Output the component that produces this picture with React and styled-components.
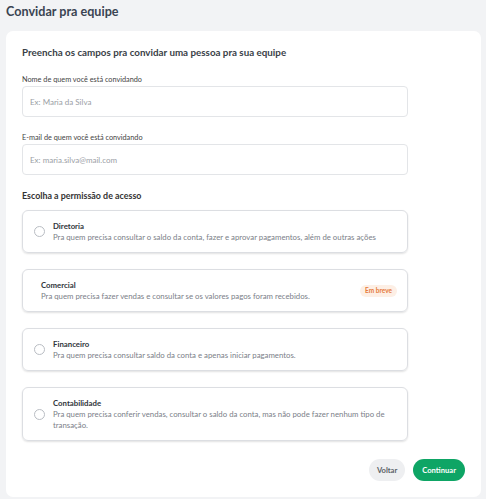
import React, { useState } from 'react';
import styled, { createGlobalStyle } from 'styled-components';

const GlobalStyle = createGlobalStyle`
  html, body {
    margin: 0;
    padding: 0;
    background: #f2f3f5;
    font-family: 'Lato', 'Noto Sans', sans-serif;
  }
  * { box-sizing: border-box; }
`;

const Page = styled.div`
  padding: 3px 5px 3px 6px;
  min-height: 499px;
`;

const PageTitle = styled.h1`
  margin: 0 0 10px;
  font-size: 12.6px;
  line-height: 18px;
  font-weight: 700;
  color: #3a4452;
`;

const Card = styled.div`
  background: #ffffff;
  border-radius: 7px;
  padding: 14px 16px 16px 16px;
`;

const Column = styled.div`
  width: 386px;
`;

const Subtitle = styled.h2`
  margin: 0 0 16px;
  font-size: 9.8px;
  line-height: 14px;
  font-weight: 700;
  color: #3a3f47;
`;

const Field = styled.div`
  display: flex;
  flex-direction: column;
  gap: 2px;
  margin-bottom: ${p => p.last ? 15 : 16}px;
`;

const Label = styled.label`
  font-size: 7.3px;
  line-height: 9px;
  color: #444;
`;

const Input = styled.input`
  height: 31px;
  width: 100%;
  border: 1px solid #e3e5e8;
  border-radius: 4px;
  padding: 0 7px;
  font-family: inherit;
  font-size: 8px;
  color: #333;
  outline: none;
  &::placeholder { color: #9a9ea5; }
`;

const SectionTitle = styled.h3`
  margin: 3px 0 8px;
  font-size: 8.9px;
  line-height: 12px;
  font-weight: 700;
  color: #333;
`;

const Options = styled.div`
  display: flex;
  flex-direction: column;
  gap: 16px;
`;

const Option = styled.div`
  display: flex;
  align-items: center;
  gap: 8px;
  min-height: ${p => p.tall ? 54 : 43}px;
  padding: 8px 10px 8px ${p => p.noRadio ? 18 : 11}px;
  border: 1px solid #dcdee2;
  border-radius: 6px;
  box-shadow: 0 1px 2px rgba(0, 0, 0, 0.12);
  cursor: ${p => p.disabled ? 'default' : 'pointer'};
`;

const Radio = styled.span`
  flex: none;
  width: 11px;
  height: 11px;
  border-radius: 50%;
  border: 1px solid ${p => p.checked ? '#0ea565' : '#b9bdc3'};
  background: ${p => p.checked ? 'radial-gradient(#0ea565 40%, #fff 45%)' : '#fff'};
`;

const OptionText = styled.div`
  flex: 1;
  display: flex;
  flex-direction: column;
`;

const OptionTitle = styled.span`
  font-size: 7.8px;
  line-height: 11px;
  font-weight: 700;
  color: #30343a;
`;

const OptionDesc = styled.span`
  font-size: 7.8px;
  line-height: 11px;
  color: #7b8088;
`;

const Badge = styled.span`
  flex: none;
  padding: 2px 5px;
  border-radius: 8px;
  background: #fdefe5;
  color: #e57a3b;
  font-size: 6.5px;
  font-weight: 700;
  line-height: 8px;
`;

const Actions = styled.div`
  display: flex;
  justify-content: flex-end;
  gap: 8px;
  margin-top: 18px;
`;

const Button = styled.button`
  height: 22px;
  padding: 0 ${p => p.primary ? 9 : 8}px;
  border: none;
  border-radius: 11px;
  font-family: inherit;
  font-size: 7.6px;
  font-weight: 700;
  background: ${p => p.primary ? '#0ea565' : '#eeeff1'};
  color: ${p => p.primary ? '#ffffff' : '#5a5f66'};
  cursor: pointer;
`;

const roles = [
  {
    id: 'diretoria',
    title: 'Diretoria',
    desc: 'Pra quem precisa consultar o saldo da conta, fazer e aprovar pagamentos, além de outras ações',
  },
  {
    id: 'comercial',
    title: 'Comercial',
    desc: 'Pra quem precisa fazer vendas e consultar se os valores pagos foram recebidos.',
    soon: true,
  },
  {
    id: 'financeiro',
    title: 'Financeiro',
    desc: 'Pra quem precisa consultar saldo da conta e apenas iniciar pagamentos.',
  },
  {
    id: 'contabilidade',
    title: 'Contabilidade',
    desc: 'Pra quem precisa conferir vendas, consultar o saldo da conta, mas não pode fazer nenhum tipo de transação.',
    tall: true,
  },
];

const App = () => {
  const [role, setRole] = useState(null);

  return (
    <Page>
      <GlobalStyle />
      <PageTitle>Convidar pra equipe</PageTitle>
      <Card>
        <Subtitle>Preencha os campos pra convidar uma pessoa pra sua equipe</Subtitle>
        <Column>
          <Field>
            <Label>Nome de quem você está convidando</Label>
            <Input placeholder="Ex: Maria da Silva" />
          </Field>
          <Field last>
            <Label>E-mail de quem você está convidando</Label>
            <Input placeholder="Ex: maria.silva@mail.com" />
          </Field>
          <SectionTitle>Escolha a permissão de acesso</SectionTitle>
          <Options>
            {roles.map(r => (
              <Option
                key={r.id}
                noRadio={r.soon}
                disabled={r.soon}
                tall={r.tall}
                onClick={() => !r.soon && setRole(r.id)}
              >
                {!r.soon && <Radio checked={role === r.id} />}
                <OptionText>
                  <OptionTitle>{r.title}</OptionTitle>
                  <OptionDesc>{r.desc}</OptionDesc>
                </OptionText>
                {r.soon && <Badge>Em breve</Badge>}
              </Option>
            ))}
          </Options>
        </Column>
        <Actions>
          <Button>Voltar</Button>
          <Button primary>Continuar</Button>
        </Actions>
      </Card>
    </Page>
  );
};

export default App;
